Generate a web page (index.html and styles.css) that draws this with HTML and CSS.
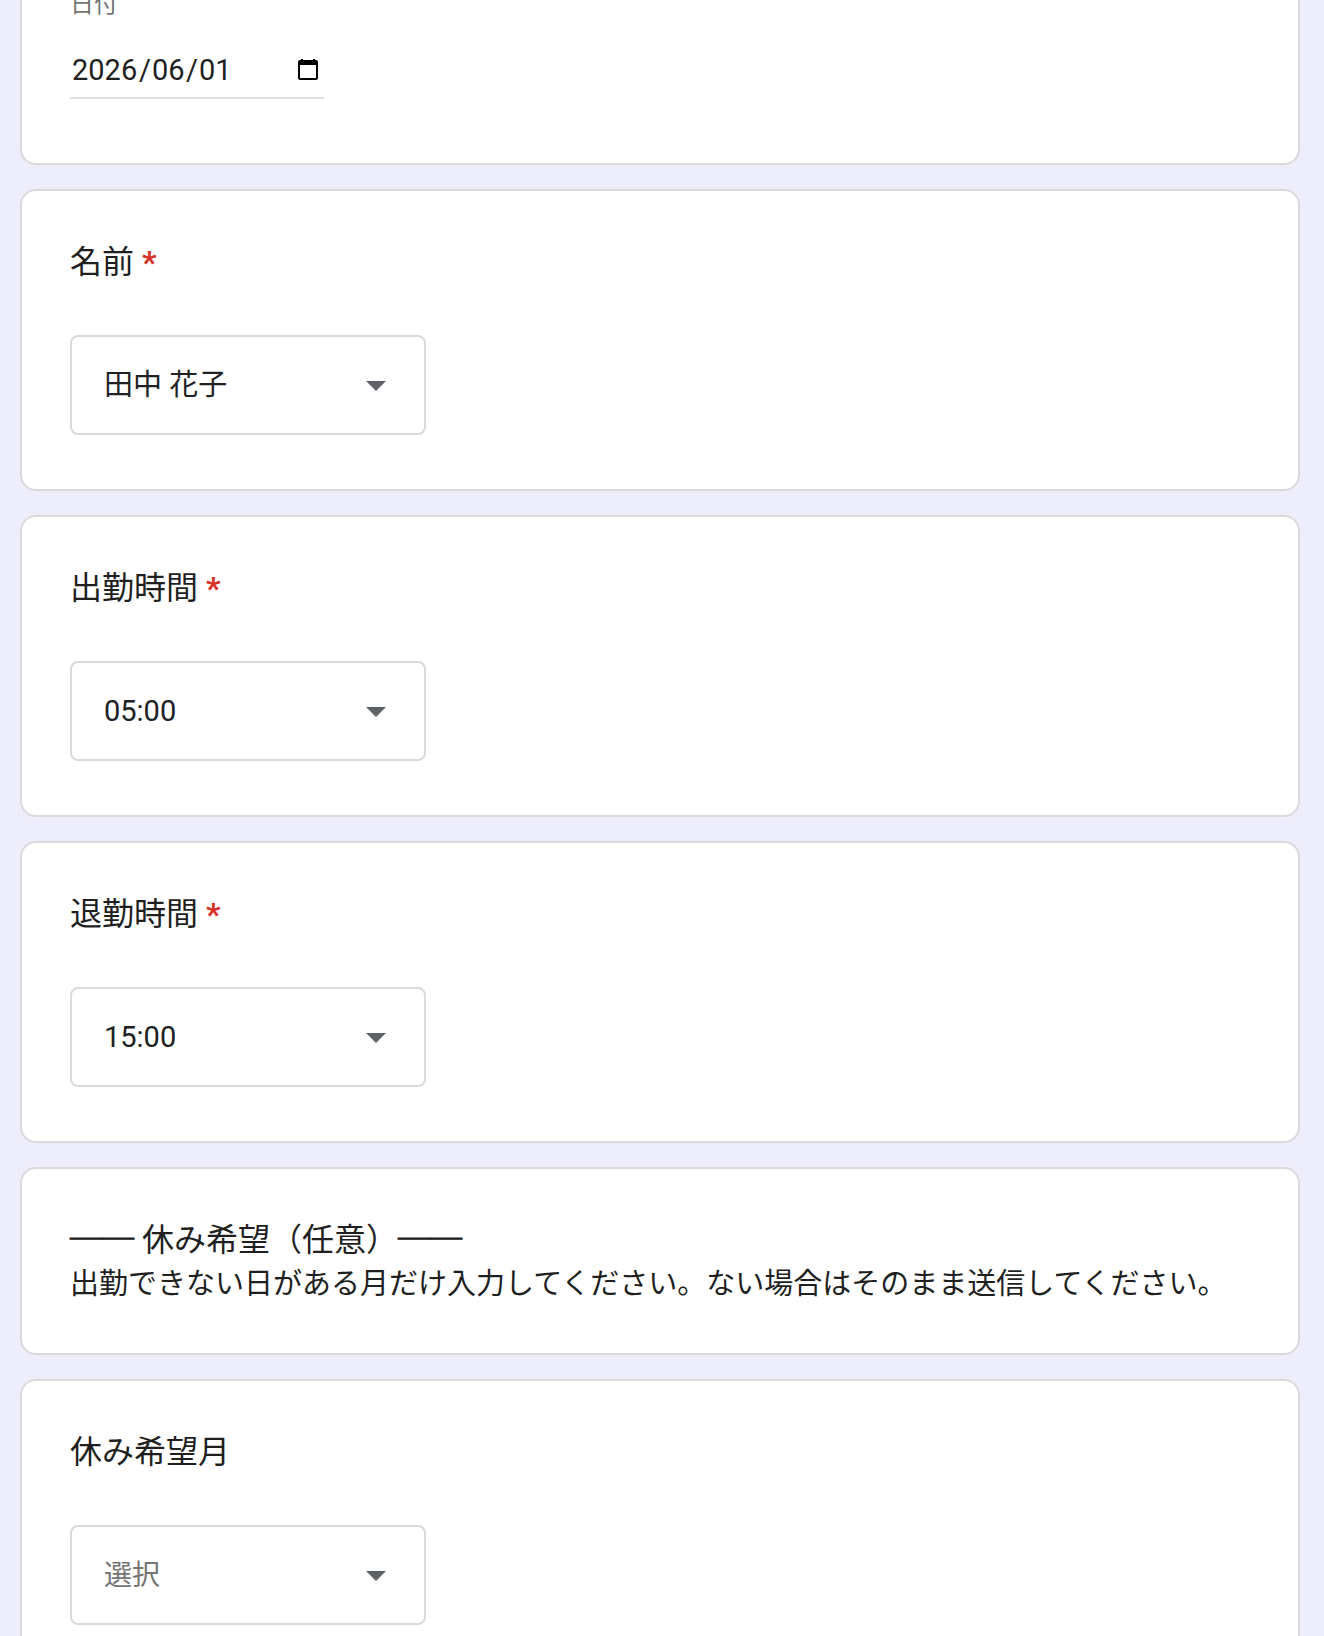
FILE: index.html
```html
<!DOCTYPE html>
<html lang="ja">
<head>
  <meta charset="utf-8">
  <meta name="viewport" content="width=device-width, initial-scale=1">
  <title>休み希望</title>
  <link rel="stylesheet" href="styles.css">
</head>
<body>
  <form class="form">
    <section class="card card--date">
      <div class="date-label" id="date-label">日付</div>
      <div class="date-field" role="group" aria-labelledby="date-label">
        <div class="date-parts">
          <input class="date-part date-part--year" type="text" inputmode="numeric" value="2026" aria-label="年">
          <span>/</span>
          <input class="date-part" type="text" inputmode="numeric" value="06" aria-label="月">
          <span>/</span>
          <input class="date-part" type="text" inputmode="numeric" value="01" aria-label="日">
        </div>
        <button class="date-button" type="button" aria-label="カレンダーを開く">
          <svg width="20" height="22" viewBox="0 0 20 22" aria-hidden="true">
            <path fill-rule="evenodd" d="M3 0h2v1h10V0h2v1h1a2 2 0 0 1 2 2v16a2 2 0 0 1-2 2H2a2 2 0 0 1-2-2V3a2 2 0 0 1 2-2h1zM2 6v13h16V6z"/>
          </svg>
        </button>
      </div>
    </section>

    <section class="card">
      <label class="title" for="name">名前 <span class="required">*</span></label>
      <div class="dropdown">
        <select class="select" id="name" required>
          <option>田中 花子</option>
        </select>
        <svg class="caret" width="20" height="12" viewBox="0 0 20 12" aria-hidden="true"><path d="M0 2h20L10 12z"/></svg>
      </div>
    </section>

    <section class="card">
      <label class="title" for="start">出勤時間 <span class="required">*</span></label>
      <div class="dropdown">
        <select class="select" id="start" required>
          <option>05:00</option>
        </select>
        <svg class="caret" width="20" height="12" viewBox="0 0 20 12" aria-hidden="true"><path d="M0 2h20L10 12z"/></svg>
      </div>
    </section>

    <section class="card">
      <label class="title" for="end">退勤時間 <span class="required">*</span></label>
      <div class="dropdown">
        <select class="select" id="end" required>
          <option>15:00</option>
        </select>
        <svg class="caret" width="20" height="12" viewBox="0 0 20 12" aria-hidden="true"><path d="M0 2h20L10 12z"/></svg>
      </div>
    </section>

    <section class="card card--note">
      <h2 class="title"><span class="dash">──</span> 休み希望（任意）<span class="dash">──</span></h2>
      <p class="description">出勤できない日がある月だけ入力してください。ない場合はそのまま送信してください。</p>
    </section>

    <section class="card">
      <label class="title" for="month">休み希望月</label>
      <div class="dropdown">
        <select class="select select--empty" id="month">
          <option>選択</option>
        </select>
        <svg class="caret" width="20" height="12" viewBox="0 0 20 12" aria-hidden="true"><path d="M0 2h20L10 12z"/></svg>
      </div>
    </section>
  </form>
</body>
</html>
```

FILE: styles.css
```css
* {
  box-sizing: border-box;
}

body {
  margin: 0;
  background: #eeedfb;
  color: #1f1f1f;
  font-family: Roboto, "Noto Sans CJK JP", sans-serif;
}

.form {
  display: flex;
  flex-direction: column;
  gap: 24px;
  height: 100vh;
  padding: 0 24px 0 20px;
  overflow-y: auto;
  scrollbar-width: none;
}

.card {
  flex: none;
  padding: 47px 48px 54px;
  border: 2px solid #dadada;
  border-radius: 16px;
  background: #fff;
}

.card--date {
  padding: 0 48px 64px;
  border-top: 0;
  border-top-left-radius: 0;
  border-top-right-radius: 0;
}

.card--note {
  padding-bottom: 49px;
}

.title {
  display: block;
  margin: 0;
  font-size: 32px;
  font-weight: 400;
  line-height: 48px;
}

.required {
  color: #d93025;
  font-weight: 700;
}

.dash {
  -webkit-text-stroke: 1px currentColor;
}

.description {
  margin: 0;
  font-size: 29px;
  line-height: 40px;
}

.date-label {
  margin-top: -12px;
  color: #757575;
  font-size: 24px;
  line-height: 32px;
}

.date-field {
  display: flex;
  align-items: center;
  justify-content: space-between;
  width: 254px;
  height: 57px;
  margin-top: 22px;
  padding: 0 6px 0 2px;
  border-bottom: 2px solid #e0e0e0;
}

.date-parts {
  display: flex;
  align-items: center;
  gap: 1px;
  font-size: 29px;
  line-height: 40px;
}

.date-part {
  width: 33px;
  height: 40px;
  padding: 0;
  border: 0;
  background: none;
  color: inherit;
  font: inherit;
}

.date-part--year {
  width: 66px;
}

.date-button {
  display: flex;
  padding: 0;
  border: 0;
  background: none;
}

.dropdown {
  display: grid;
  align-items: center;
  width: 356px;
  max-width: 100%;
  margin-top: 49px;
}

.select {
  grid-area: 1 / 1;
  width: 100%;
  height: 100px;
  padding: 0 80px 0 32px;
  border: 2px solid #dadada;
  border-radius: 8px;
  appearance: none;
  background: #fff;
  color: #202124;
  font-family: inherit;
  font-size: 29px;
}

.select--empty {
  color: #757575;
  font-size: 28px;
}

.caret {
  grid-area: 1 / 1;
  justify-self: end;
  margin-right: 40px;
  fill: #5f6368;
  pointer-events: none;
}
```
